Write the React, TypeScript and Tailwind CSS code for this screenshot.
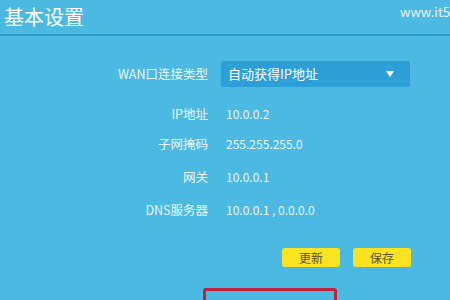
import React from "react";

const font = "font-['Microsoft_YaHei','Noto_Sans_CJK_SC','Noto_Sans',sans-serif]";

function Row({ label, children, className = "" }: { label: string; children: React.ReactNode; className?: string }) {
  return (
    <div className={`flex items-center h-[26px] ${className}`}>
      <div className="w-[208px] text-right text-[12.5px] leading-[16px] text-[#eef8fc] shrink-0">{label}</div>
      <div className="ml-[13px] flex items-center">{children}</div>
    </div>
  );
}

export default function App() {
  return (
    <div className={`w-[450px] h-[300px] overflow-hidden bg-[#4bb9e1] ${font}`}>
      <div className="flex items-start h-[36px] border-b-2 border-[#2d9fcf] pl-[4px]">
        <div className="w-[396px] shrink-0 pt-[6px] text-[20px] leading-[22px] text-white">基本设置</div>
        <div className="pt-[4px] text-[13px] leading-[16px] text-[#e6f5fb] whitespace-nowrap">www.it5cn.com</div>
      </div>
      <div className="flex flex-col">
        <Row label="WAN口连接类型" className="mt-[25px]">
          <div className="w-[189px] h-[26px] rounded-[2px] bg-[#2b9fd6] flex items-center justify-between pl-[7px] pr-[16px]">
            <span className="text-[13px] leading-[16px] text-white">自动获得IP地址</span>
            <svg width="8" height="6" viewBox="0 0 8 6"><path d="M0 0 H8 L4 6 Z" fill="#ffffff" /></svg>
          </div>
        </Row>
        <Row label="IP地址" className="mt-[14px]">
          <span className="pl-[5px] text-[12px] leading-[16px] text-[#eef8fc]">10.0.0.2</span>
        </Row>
        <Row label="子网掩码" className="mt-[4px]">
          <span className="pl-[5px] text-[12px] leading-[16px] text-[#eef8fc]">255.255.255.0</span>
        </Row>
        <Row label="网关" className="mt-[7px]">
          <span className="pl-[5px] text-[12px] leading-[16px] text-[#eef8fc]">10.0.0.1</span>
        </Row>
        <Row label="DNS服务器" className="mt-[7px]">
          <span className="pl-[5px] text-[12px] leading-[16px] text-[#eef8fc]">10.0.0.1 , 0.0.0.0</span>
        </Row>
        <div className="flex justify-end gap-[13px] pr-[39px] mt-[25px]">
          <button className="w-[58px] h-[19px] rounded-[3px] bg-[#fbe322] text-[12px] leading-[19px] text-[#5a5230]">更新</button>
          <button className="w-[58px] h-[19px] rounded-[3px] bg-[#fbe322] text-[12px] leading-[19px] text-[#5a5230]">保存</button>
        </div>
        <div className="ml-[203px] mt-[21px] w-[134px] h-[30px] border-[3px] border-[#bf2339] rounded-[3px]" />
      </div>
    </div>
  );
}
